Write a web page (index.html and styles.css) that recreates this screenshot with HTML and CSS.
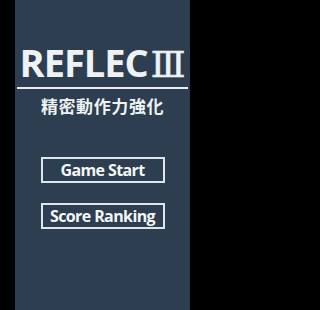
FILE: index.html
```html
<!DOCTYPE html>
<html lang="ja">
<head>
<meta charset="utf-8">
<title>REFLEC III</title>
<link rel="stylesheet" href="styles.css">
</head>
<body>
<div class="panel">
  <div class="title">
    <span class="word">REFLEC</span><span class="num">Ⅲ</span>
  </div>
  <div class="rule"></div>
  <div class="subtitle">精密動作力強化</div>
  <div class="menu">
    <div class="btn">Game Start</div>
    <div class="btn">Score Ranking</div>
  </div>
</div>
</body>
</html>
```
FILE: styles.css
```css
html, body {
  margin: 0;
  padding: 0;
  background: #000;
}
body {
  width: 207px;
  height: 310px;
  overflow: hidden;
}
.panel {
  margin-left: 15px;
  width: 175px;
  height: 310px;
  background: #2c3e50;
  display: flex;
  flex-direction: column;
  align-items: stretch;
}
.title {
  margin-top: 43px;
  height: 38px;
  display: flex;
  justify-content: center;
  align-items: baseline;
  color: #eef2f3;
  font-family: "Open Sans", sans-serif;
  font-weight: 700;
  font-size: 38px;
  line-height: 38px;
  letter-spacing: -1px;
}
.num {
  font-family: "DejaVu Serif", serif;
  font-weight: 400;
  font-size: 36px;
  margin-left: 3px;
  letter-spacing: 0;
  -webkit-text-stroke: 0.6px #eef2f3;
}
.rule {
  margin: 6px 2px 0 2px;
  height: 2px;
  background: #e8eef0;
}
.subtitle {
  margin-top: 7px;
  text-align: center;
  color: #eef2f3;
  font-family: "Noto Sans CJK JP", sans-serif;
  font-weight: 700;
  font-size: 17px;
  line-height: 19px;
  letter-spacing: 0.6px;
}
.menu {
  margin-top: 42px;
  display: flex;
  flex-direction: column;
  align-items: center;
  gap: 20px;
}
.btn {
  box-sizing: border-box;
  width: 124px;
  height: 26px;
  border: 2px solid #dfe6e9;
  display: flex;
  align-items: center;
  justify-content: center;
  color: #f4f6f7;
  font-family: "Open Sans", sans-serif;
  font-weight: 700;
  font-size: 16px;
  letter-spacing: -0.6px;
}
```
